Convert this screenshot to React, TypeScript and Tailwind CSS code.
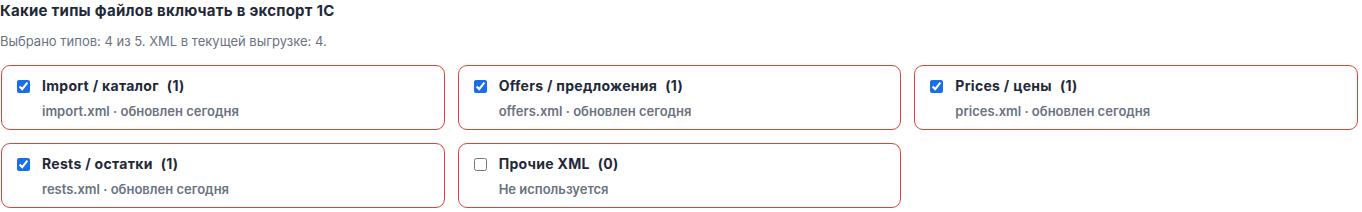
import React, { useState } from 'react';

type FileType = {
  id: string;
  label: string;
  count: number;
  hint: string;
  checked: boolean;
};

const initialTypes: FileType[] = [
  { id: 'import', label: 'Import / каталог', count: 1, hint: 'import.xml · обновлен сегодня', checked: true },
  { id: 'offers', label: 'Offers / предложения', count: 1, hint: 'offers.xml · обновлен сегодня', checked: true },
  { id: 'prices', label: 'Prices / цены', count: 1, hint: 'prices.xml · обновлен сегодня', checked: true },
  { id: 'rests', label: 'Rests / остатки', count: 1, hint: 'rests.xml · обновлен сегодня', checked: true },
  { id: 'other', label: 'Прочие XML', count: 0, hint: 'Не используется', checked: false },
];

const App: React.FC = () => {
  const [types, setTypes] = useState<FileType[]>(initialTypes);

  const toggle = (id: string) => {
    setTypes(prev => prev.map(t => (t.id === id ? { ...t, checked: !t.checked } : t)));
  };

  const selected = types.filter(t => t.checked).length;

  return (
    <div className="w-[1362px] h-[212px] bg-white font-['Inter','Noto_Sans',sans-serif] text-[#1f2937]">
      {/* Header */}
      <div className="pt-[1px]">
        <h3 className="text-[15px] leading-[20px] font-bold tracking-[0.25px] text-[#1f2937]">
          Какие типы файлов включать в экспорт 1С
        </h3>
        <p className="mt-[11px] text-[13px] leading-[18px] text-[#6b7280]">
          Выбрано типов: {selected} из {types.length}. XML в текущей выгрузке: 4.
        </p>
      </div>

      {/* Cards */}
      <div className="mt-[15px] ml-[1px] w-[1357px] grid grid-cols-3 gap-[13px]">
        {types.map(t => (
          <label
            key={t.id}
            className="flex items-start gap-[12px] px-[15px] pt-[10px] pb-[9px] border border-[#d9463e] rounded-[9px] bg-white cursor-pointer"
          >
            <input
              type="checkbox"
              checked={t.checked}
              onChange={() => toggle(t.id)}
              className="mt-[4px] w-[13px] h-[13px] m-0 shrink-0 accent-[#1a6fe6]"
            />
            <div>
              <div className="flex items-center gap-[8px] text-[14px] leading-[20px] font-bold tracking-[0.3px] text-[#1f2937]">
                <span>{t.label}</span>
                <span>({t.count})</span>
              </div>
              <div className="mt-[6px] text-[13px] leading-[18px] font-semibold text-[#6b7280]">
                {t.hint}
              </div>
            </div>
          </label>
        ))}
      </div>
    </div>
  );
};

export default App;
